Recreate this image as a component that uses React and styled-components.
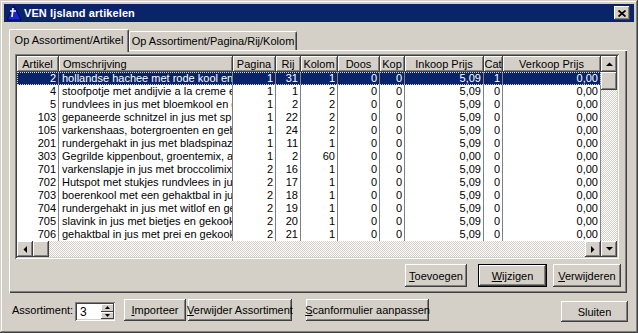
import React from 'react'
import styled, { createGlobalStyle, css } from 'styled-components'

const GlobalStyle = createGlobalStyle`
    html, body {
        margin: 0;
        padding: 0;
        background: #d4d0c8;
    }
    body {
        font-family: "Liberation Sans", Arial, sans-serif;
        font-size: 11px;
        color: #000;
    }
    * {
        box-sizing: border-box;
    }
`

const raised = css`
    box-shadow: inset -1px -1px #404040, inset 1px 1px #fff, inset -2px -2px #808080, inset 2px 2px #d4d0c8;
`
const sunken = css`
    box-shadow: inset 1px 1px #808080, inset -1px -1px #fff, inset 2px 2px #404040, inset -2px -2px #d4d0c8;
`
const checker = css`
    background: repeating-conic-gradient(#fff 0 25%, #d4d0c8 0 50%) 0 0 / 2px 2px;
`

const Window = styled.div`
    width: 638px;
    height: 333px;
    background: #d4d0c8;
    padding: 4px;
    display: flex;
    flex-direction: column;
    box-shadow: inset -1px -1px #404040, inset 1px 1px #d4d0c8, inset -2px -2px #808080, inset 2px 2px #fff;
`
const TitleBar = styled.div`
    height: 18px;
    background: #0a246a;
    display: flex;
    align-items: center;
    padding: 0 4px 0 2px;
    color: #fff;
`
const Title = styled.div`
    font-weight: bold;
    font-size: 11px;
    margin-left: 2px;
    flex: 1;
    letter-spacing: 0.1px;
`
const CloseButton = styled.div`
    width: 16px;
    height: 14px;
    background: #d4d0c8;
    display: flex;
    align-items: center;
    justify-content: center;
    ${raised}
`
const Body = styled.div`
    flex: 1;
    display: flex;
    flex-direction: column;
    padding: 7px 7px 0 5px;
`
const TabStrip = styled.div`
    display: flex;
    align-items: flex-end;
    height: 21px;
`
const Tab = styled.div`
    width: ${p => p.$w}px;
    height: ${p => (p.$active ? 23 : 19)}px;
    margin-bottom: ${p => (p.$active ? -2 : 0)}px;
    position: relative;
    z-index: ${p => (p.$active ? 1 : 0)};
    background: #d4d0c8;
    border-top: 1px solid #fff;
    border-left: 1px solid #fff;
    border-right: 1px solid #404040;
    border-radius: 2px 2px 0 0;
    box-shadow: inset -1px 0 #808080;
    display: flex;
    justify-content: center;
    padding-top: ${p => (p.$active ? 4 : 3)}px;
    white-space: nowrap;
`
const Sheet = styled.div`
    height: 243px;
    padding: 4px 7px 0 6px;
    display: flex;
    flex-direction: column;
    box-shadow: inset 1px 1px #fff, inset -1px -1px #404040, inset -2px -2px #808080;
`
const Grid = styled.div`
    width: 604px;
    height: 205px;
    padding: 2px;
    display: flex;
    background: #fff;
    ${sunken}
`
const GridMain = styled.div`
    width: 584px;
    display: flex;
    flex-direction: column;
`
const HeaderRow = styled.div`
    display: flex;
    height: 16px;
`
const HeaderCell = styled.div`
    width: ${p => p.$w}px;
    flex: none;
    height: 16px;
    background: #d4d0c8;
    overflow: hidden;
    white-space: nowrap;
    display: flex;
    align-items: center;
    justify-content: ${p => (p.$left ? 'flex-start' : 'center')};
    padding: ${p => (p.$left ? '0 0 0 4px' : '0 1px')};
    border-right: 1px solid #404040;
    border-bottom: 1px solid #404040;
    box-shadow: inset 1px 1px #fff, inset -1px -1px #808080;
`
const Row = styled.div`
    display: flex;
    height: 13px;
    background: ${p => (p.$selected ? '#0a246a' : '#fff')};
    color: ${p => (p.$selected ? '#fff' : '#000')};
    ${p => p.$selected && css`
        outline: 1px dotted #d8d8d8;
        outline-offset: -1px;
    `}
`
const Cell = styled.div`
    width: ${p => p.$w}px;
    flex: none;
    height: 13px;
    line-height: 13px;
    overflow: hidden;
    white-space: nowrap;
    text-align: ${p => p.$align};
    padding: ${p => (p.$align === 'left' ? '0 0 0 3px' : '0 2px 0 0')};
    border-right: 1px solid #808080;
`
const HScroll = styled.div`
    height: 16px;
    display: flex;
    ${checker}
`
const VScroll = styled.div`
    width: 16px;
    display: flex;
    flex-direction: column;
    ${checker}
`
const ScrollButton = styled.div`
    width: 16px;
    height: ${p => p.$h || 16}px;
    flex: none;
    background: #d4d0c8;
    display: flex;
    align-items: center;
    justify-content: center;
    ${raised}
`
const Track = styled.div`
    flex: 1;
`
const ButtonRow = styled.div`
    display: flex;
    justify-content: flex-end;
    margin-top: 5px;
    margin-right: -1px;
`
const Button = styled.div`
    width: ${p => p.$w}px;
    height: ${p => p.$h || 23}px;
    margin-left: ${p => p.$ml || 0}px;
    flex: none;
    background: #d4d0c8;
    display: flex;
    align-items: center;
    justify-content: center;
    white-space: nowrap;
    ${raised}
    ${p => p.$default && css`
        box-shadow: inset 0 0 0 1px #000, inset -2px -2px #404040, inset 2px 2px #fff, inset -3px -3px #808080;
    `}
`
const Footer = styled.div`
    display: flex;
    align-items: center;
    margin-top: 6px;
    height: 22px;
    margin-right: -1px;
`
const Label = styled.div`
    margin-left: 3px;
    width: 63px;
`
const SpinEdit = styled.div`
    width: 40px;
    height: 19px;
    margin-top: 3px;
    background: #fff;
    display: flex;
    align-items: center;
    justify-content: space-between;
    padding: 2px 1px 2px 5px;
    font-size: 12px;
    ${sunken}
`
const SpinButtons = styled.div`
    width: 13px;
    height: 15px;
    display: flex;
    flex-direction: column;
`
const SpinHalf = styled.div`
    flex: 1;
    background: #d4d0c8;
    display: flex;
    align-items: center;
    justify-content: center;
    box-shadow: inset -1px -1px #404040, inset 1px 1px #fff;
`
const Spacer = styled.div`
    flex: 1;
`

const Arrow = ({ dir, size = 7 }) => {
    const pts = {
        up: '0,4 7,4 3.5,0.5',
        down: '0,0 7,0 3.5,3.5',
        left: '4,0 4,7 0.5,3.5',
        right: '0,0 0,7 3.5,3.5',
    }[dir]
    const vertical = dir === 'up' || dir === 'down'
    const w = vertical ? size : 4
    const h = vertical ? 4 : size
    return (
        <svg width={w} height={h} viewBox={`0 0 ${w} ${h}`}>
            <polygon points={pts} fill="#000" />
        </svg>
    )
}

const SmallArrow = ({ dir }) => (
    <svg width="5" height="3" viewBox="0 0 5 3">
        <polygon points={dir === 'up' ? '0,3 5,3 2.5,0' : '0,0 5,0 2.5,3'} fill="#000" />
    </svg>
)

const AppIcon = () => (
    <svg width="16" height="16" viewBox="0 0 16 16">
        <polygon points="8,1 15,15 1,15" fill="#1c24d8" stroke="#00006a" strokeWidth="1" />
        <path d="M7 3L6 12" stroke="#fff" strokeWidth="1.6" />
        <path d="M4 6H10" stroke="#fff" strokeWidth="1.4" />
    </svg>
)

const CloseGlyph = () => (
    <svg width="8" height="7" viewBox="0 0 8 7">
        <path d="M0.5 0.5L7.5 6.5M7.5 0.5L0.5 6.5" stroke="#000" strokeWidth="1.7" />
    </svg>
)

const columns = [
    { title: 'Artikel', w: 42, align: 'right' },
    { title: 'Omschrijving', w: 174, align: 'left', left: true },
    { title: 'Pagina', w: 43, align: 'right' },
    { title: 'Rij', w: 25, align: 'right' },
    { title: 'Kolom', w: 37, align: 'right' },
    { title: 'Doos', w: 42, align: 'right' },
    { title: 'Kop', w: 25, align: 'right' },
    { title: 'Inkoop Prijs', w: 79, align: 'right' },
    { title: 'Cat', w: 19, align: 'right' },
    { title: 'Verkoop Prijs', w: 98, align: 'right' },
]

const rows = [
    ['2', 'hollandse hachee met rode kool en aardappelen', '1', '31', '1', '0', '0', '5,09', '1', '0,00'],
    ['4', 'stoofpotje met andijvie a la creme en gehakt', '1', '1', '2', '0', '0', '5,09', '0', '0,00'],
    ['5', 'rundvlees in jus met bloemkool en gekookte aardappelen', '1', '2', '2', '0', '0', '5,09', '0', '0,00'],
    ['103', 'gepaneerde schnitzel in jus met sperziebonen', '1', '22', '2', '0', '0', '5,09', '0', '0,00'],
    ['105', 'varkenshaas, botergroenten en gebakken aardappelen', '1', '24', '2', '0', '0', '5,09', '0', '0,00'],
    ['201', 'rundergehakt in jus met bladspinazie en aardappelen', '1', '11', '1', '0', '0', '5,09', '0', '0,00'],
    ['303', 'Gegrilde kippenbout, groentemix, aardappelen', '1', '2', '60', '0', '0', '0,00', '0', '0,00'],
    ['701', 'varkenslapje in jus met broccolimix en aardappelen', '2', '16', '1', '0', '0', '5,09', '0', '0,00'],
    ['702', 'Hutspot met stukjes rundvlees in jus', '2', '17', '1', '0', '0', '5,09', '0', '0,00'],
    ['703', 'boerenkool met een gehaktbal in jus', '2', '18', '1', '0', '0', '5,09', '0', '0,00'],
    ['704', 'rundergehakt in jus met witlof en gekookte aardappelen', '2', '19', '1', '0', '0', '5,09', '0', '0,00'],
    ['705', 'slavink in jus met bietjes en gekookte aardappelen', '2', '20', '1', '0', '0', '5,09', '0', '0,00'],
    ['706', 'gehaktbal in jus met prei en gekookte aardappelen', '2', '21', '1', '0', '0', '5,09', '0', '0,00'],
]

const App = () => {
    return (
        <>
            <GlobalStyle />
            <Window>
                <TitleBar>
                    <AppIcon />
                    <Title>VEN Ijsland artikelen</Title>
                    <CloseButton><CloseGlyph /></CloseButton>
                </TitleBar>
                <Body>
                    <TabStrip>
                        <Tab $active $w={120}>Op Assortiment/Artikel</Tab>
                        <Tab $w={168}>Op Assortiment/Pagina/Rij/Kolom</Tab>
                    </TabStrip>
                    <Sheet>
                        <Grid>
                            <GridMain>
                                <HeaderRow>
                                    {columns.map(c => (
                                        <HeaderCell key={c.title} $w={c.w} $left={c.left}>{c.title}</HeaderCell>
                                    ))}
                                </HeaderRow>
                                {rows.map((r, i) => (
                                    <Row key={r[0]} $selected={i === 0}>
                                        {r.map((v, j) => (
                                            <Cell key={j} $w={columns[j].w} $align={columns[j].align}>{v}</Cell>
                                        ))}
                                    </Row>
                                ))}
                                <HScroll>
                                    <ScrollButton><Arrow dir="left" /></ScrollButton>
                                    <ScrollButton />
                                    <Track />
                                    <ScrollButton><Arrow dir="right" /></ScrollButton>
                                </HScroll>
                            </GridMain>
                            <VScroll>
                                <ScrollButton><Arrow dir="up" /></ScrollButton>
                                <ScrollButton $h={18} />
                                <Track />
                                <ScrollButton><Arrow dir="down" /></ScrollButton>
                            </VScroll>
                        </Grid>
                        <ButtonRow>
                            <Button $w={62}><span><u>T</u>oevoegen</span></Button>
                            <Button $w={69} $ml={11} $default><span><u>W</u>ijzigen</span></Button>
                            <Button $w={68} $ml={6}><span><u>V</u>erwijderen</span></Button>
                        </ButtonRow>
                    </Sheet>
                    <Footer>
                        <Label>Assortiment:</Label>
                        <SpinEdit>
                            <span>3</span>
                            <SpinButtons>
                                <SpinHalf><SmallArrow dir="up" /></SpinHalf>
                                <SpinHalf><SmallArrow dir="down" /></SpinHalf>
                            </SpinButtons>
                        </SpinEdit>
                        <Button $w={62} $h={22} $ml={9}><span><u>I</u>mporteer</span></Button>
                        <Button $w={104} $h={22} $ml={2}><span><u>V</u>erwijder Assortiment</span></Button>
                        <Button $w={123} $h={22} $ml={14}><span><u>S</u>canformulier aanpassen</span></Button>
                        <Spacer />
                        <Button $w={67} $h={21} style={{ marginTop: 3 }}>Sluiten</Button>
                    </Footer>
                </Body>
            </Window>
        </>
    )
}

export default App
